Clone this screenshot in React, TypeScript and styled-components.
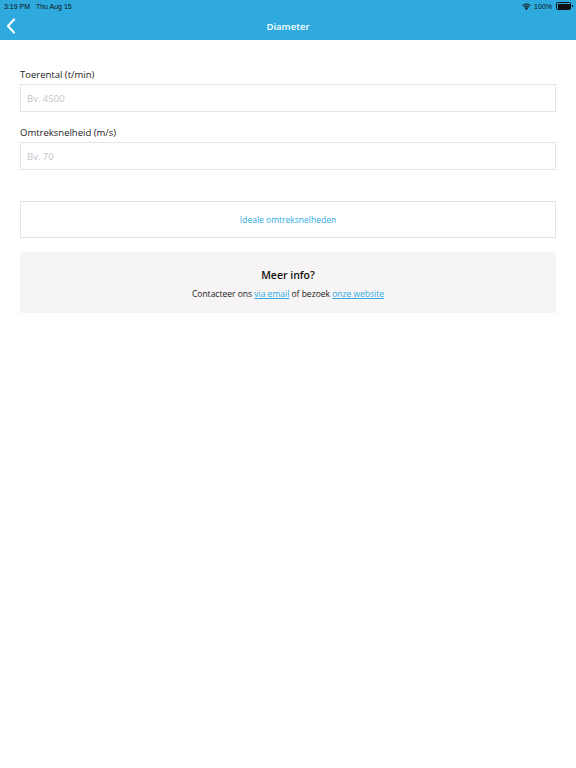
import React from 'react';
import styled, {createGlobalStyle} from "styled-components";

const GlobalStyle = createGlobalStyle`
  html, body {
    margin: 0;
    padding: 0;
    background: #fff;
    font-family: "Open Sans", "Noto Sans", sans-serif;
  }
`

const fields = [
    {label: 'Toerental (t/min)', placeholder: 'Bv. 4500'},
    {label: 'Omtreksnelheid (m/s)', placeholder: 'Bv. 70'},
]

export default function App() {
    return (
        <Page>
            <GlobalStyle/>
            <Header>
                <StatusBar>
                    <span>3:19 PM&nbsp;&nbsp;&nbsp;Thu Aug 15</span>
                    <StatusRight>
                        <svg width="9" height="7" viewBox="0 0 20 15">
                            <path d="M10 15 L6.5 11 A5 5 0 0 1 13.5 11 Z" fill="#111"/>
                            <path d="M3.6 8 A9 9 0 0 1 16.4 8 L14.8 9.7 A6.8 6.8 0 0 0 5.2 9.7 Z" fill="#111"/>
                            <path d="M0.5 4.6 A13.5 13.5 0 0 1 19.5 4.6 L17.9 6.3 A11.2 11.2 0 0 0 2.1 6.3 Z" fill="#111"/>
                        </svg>
                        <span>100%</span>
                        <Battery><i/></Battery>
                    </StatusRight>
                </StatusBar>
                <NavBar>
                    <BackButton aria-label="back">
                        <svg width="10" height="16" viewBox="0 0 10 16">
                            <path d="M8 1.5 L2 8 L8 14.5" fill="none" stroke="#fff" strokeWidth="2.2" strokeLinecap="round" strokeLinejoin="round"/>
                        </svg>
                    </BackButton>
                    <NavTitle>Diameter</NavTitle>
                </NavBar>
            </Header>

            <Content>
                {fields.map((f) => (
                    <Field key={f.label}>
                        <Label>{f.label}</Label>
                        <Input placeholder={f.placeholder}/>
                    </Field>
                ))}

                <LinkButton>Ideale omtreksnelheden</LinkButton>

                <InfoBox>
                    <InfoTitle>Meer info?</InfoTitle>
                    <InfoText>
                        Contacteer ons <a href="#">via email</a> of bezoek <a href="#">onze website</a>
                    </InfoText>
                </InfoBox>
            </Content>
        </Page>
    );
}

const Page = styled.div`
  width: 576px;
  min-height: 768px;
  background: #fff;
`

const Header = styled.header`
  background: #2EAADE;
  height: 40px;
  display: flex;
  flex-direction: column;
`

const StatusBar = styled.div`
  height: 12px;
  display: flex;
  align-items: center;
  justify-content: space-between;
  padding: 0 5px 0 4px;
  font-family: "Liberation Sans", Arial, sans-serif;
  font-size: 7px;
  color: #111;
`

const StatusRight = styled.div`
  display: flex;
  align-items: center;
  gap: 3px;
`

const Battery = styled.span`
  display: inline-flex;
  align-items: center;
  width: 12px;
  height: 5px;
  border: 1px solid #111;
  border-radius: 1.5px;
  padding: 0.5px;
  position: relative;
  margin-left: 1px;

  i {
    flex: 1;
    height: 100%;
    background: #111;
    border-radius: 0.5px;
  }

  &::after {
    content: '';
    position: absolute;
    right: -2.5px;
    top: 1.5px;
    width: 1px;
    height: 2px;
    background: #111;
  }
`

const NavBar = styled.div`
  flex: 1;
  display: flex;
  align-items: center;
  justify-content: center;
  position: relative;
`

const BackButton = styled.button`
  position: absolute;
  left: 6px;
  top: 50%;
  transform: translateY(-50%);
  background: none;
  border: none;
  padding: 0;
  display: flex;
`

const NavTitle = styled.h1`
  margin: 0;
  color: #fff;
  font-size: 9.5px;
  font-weight: 600;
`

const Content = styled.main`
  padding: 27px 20px 0;
  display: flex;
  flex-direction: column;
`

const Field = styled.div`
  display: flex;
  flex-direction: column;
  margin-bottom: 13px;
`

const Label = styled.label`
  font-size: 9.5px;
  line-height: 15px;
  color: #222;
  margin-bottom: 2px;
`

const Input = styled.input`
  box-sizing: border-box;
  height: 28px;
  border: 1px solid #E5E5E5;
  padding: 0 6px;
  font-family: inherit;
  font-size: 9.5px;
  color: #222;
  outline: none;

  &::placeholder {
    color: #C4C4C8;
  }
`

const LinkButton = styled.button`
  box-sizing: border-box;
  margin-top: 18px;
  height: 37px;
  background: #fff;
  border: 1px solid #E3E3E3;
  color: #2EAADE;
  font-family: inherit;
  font-size: 8.5px;
`

const InfoBox = styled.section`
  margin-top: 14px;
  height: 61px;
  background: #F6F4F5;
  display: flex;
  flex-direction: column;
  align-items: center;
  padding-top: 15px;
  box-sizing: border-box;
`

const InfoTitle = styled.h2`
  margin: 0;
  font-size: 10.5px;
  line-height: 16px;
  font-weight: 600;
  color: #111;
`

const InfoText = styled.p`
  margin: 5px 0 0;
  font-size: 8.5px;
  line-height: 12px;
  color: #222;

  a {
    color: #2EAADE;
    text-decoration: underline;
  }
`
